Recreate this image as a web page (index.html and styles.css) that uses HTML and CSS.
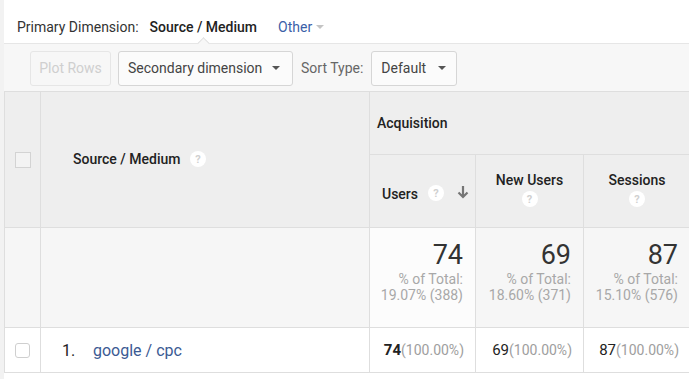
FILE: index.html
```html
<!DOCTYPE html>
<html>
<head>
<meta charset="utf-8">
<link rel="stylesheet" href="styles.css">
</head>
<body>
<div class="page">
  <div class="dimbar">
    <span class="dim-label">Primary Dimension:</span>
    <span class="dim-active">Source / Medium</span>
    <span class="dim-other">Other</span>
    <span class="caret caret-light"></span>
  </div>
  <div class="toolbar">
    <span class="notch"></span>
    <button class="btn btn-disabled">Plot Rows</button>
    <button class="btn btn-select btn-secondary">Secondary dimension <span class="caret"></span></button>
    <span class="sort-label">Sort Type:</span>
    <button class="btn btn-select btn-default">Default <span class="caret"></span></button>
  </div>
  <table class="grid">
    <colgroup>
      <col class="c-check">
      <col class="c-source">
      <col class="c-users">
      <col class="c-new">
      <col class="c-sess">
    </colgroup>
    <tr class="hrow1">
      <th class="check-cell" rowspan="2"><span class="checkbox"></span></th>
      <th class="source-head" rowspan="2">Source / Medium <span class="help"><span>?</span></span></th>
      <th class="group-head" colspan="3">Acquisition</th>
    </tr>
    <tr class="hrow2">
      <th class="metric-head users-head">
        <div class="users-inner">
          <span>Users</span><span class="help"><span>?</span></span>
          <svg class="sort-arrow" width="12" height="14" viewBox="0 0 12 14"><path d="M6 1 V12 M1.5 7.5 L6 12 L10.5 7.5" fill="none" stroke="#757575" stroke-width="2.2"/></svg>
        </div>
      </th>
      <th class="metric-head centered"><div class="mh-inner"><div>New Users</div><span class="help"><span>?</span></span></div></th>
      <th class="metric-head centered"><div class="mh-inner"><div>Sessions</div><span class="help"><span>?</span></span></div></th>
    </tr>
    <tr class="totals">
      <td class="check-cell"></td>
      <td></td>
      <td class="total sorted"><div class="big">74</div><div class="pct">% of Total:<br>19.07% (388)</div></td>
      <td class="total"><div class="big">69</div><div class="pct">% of Total:<br>18.60% (371)</div></td>
      <td class="total"><div class="big">87</div><div class="pct">% of Total:<br>15.10% (576)</div></td>
    </tr>
    <tr class="data">
      <td class="check-cell"><span class="checkbox round"></span></td>
      <td class="src"><span class="idx">1.</span><a class="link">google / cpc</a></td>
      <td class="val"><b>74</b><span class="vp">(100.00%)</span></td>
      <td class="val">69<span class="vp">(100.00%)</span></td>
      <td class="val">87<span class="vp">(100.00%)</span></td>
    </tr>
  </table>
</div>
</body>
</html>
```

FILE: styles.css
```css
html, body {
  margin: 0;
  padding: 0;
}
body {
  background: #f2f2f2;
  font-family: Roboto, "Liberation Sans", Arial, sans-serif;
  color: #333;
  width: 689px;
  height: 379px;
  overflow: hidden;
}
.page {
  margin-left: 4px;
  background: #fff;
  height: 379px;
}
.dimbar {
  height: 43px;
  display: flex;
  align-items: center;
  padding-left: 13px;
  padding-top: 11px;
  box-sizing: border-box;
  font-size: 14px;
}
.dim-label {
  color: #333;
}
.dim-active {
  font-weight: 500;
  color: #222;
  margin-left: 11px;
}
.dim-other {
  color: #3b5fa8;
  margin-left: 21px;
}
.caret {
  display: inline-block;
  width: 0;
  height: 0;
  border-left: 4px solid transparent;
  border-right: 4px solid transparent;
  border-top: 4px solid #555;
  vertical-align: middle;
}
.caret-light {
  border-top-color: #c4c4c4;
  margin-left: 4px;
}
.toolbar {
  position: relative;
  height: 48px;
  background: #f7f7f7;
  border-top: 1px solid #e6e6e6;
  box-sizing: border-box;
  display: flex;
  align-items: center;
  padding-left: 26px;
  padding-top: 1px;
}
.notch {
  position: absolute;
  left: 195px;
  top: -5px;
  width: 8px;
  height: 8px;
  background: #f7f7f7;
  border-left: 1px solid #e0e0e0;
  border-top: 1px solid #e0e0e0;
  transform: rotate(45deg);
}
.btn {
  font-family: Roboto, "Liberation Sans", Arial, sans-serif;
  font-size: 14px;
  height: 35px;
  box-sizing: border-box;
  border: 1px solid #d6d6d6;
  border-radius: 3px;
  background: #fbfbfb;
  color: #444;
  padding: 0 9px;
  margin: 0;
  white-space: nowrap;
}
.btn-disabled {
  width: 81px;
  padding: 0;
  text-align: center;
  color: #cfcfcf;
  border-color: #e6e6e6;
  background: #f7f7f7;
}
.btn-secondary {
  width: 175px;
  margin-left: 7px;
  text-align: left;
  display: flex;
  align-items: center;
  justify-content: space-between;
}
.btn-secondary .caret {
  margin-right: 3px;
}
.sort-label {
  font-size: 14px;
  color: #666;
  margin-left: 8px;
}
.btn-default {
  width: 86px;
  margin-left: 8px;
  display: flex;
  align-items: center;
  justify-content: space-between;
}
.btn-default .caret {
  margin-right: 1px;
}
.grid {
  border-collapse: collapse;
  table-layout: fixed;
  width: 686px;
  font-size: 14px;
}
.c-check { width: 36px; }
.c-source { width: 329px; }
.c-users { width: 106px; }
.c-new { width: 108px; }
.c-sess { width: 107px; }
.grid th, .grid td {
  border: 1px solid #dedede;
  padding: 0;
}
.grid th {
  background: #eeeeee;
  font-weight: 500;
  color: #222;
  text-align: left;
}
.hrow1 th { height: 62px; }
.hrow2 th { height: 72px; }
.grid .check-cell {
  text-align: center;
}
.checkbox {
  display: inline-block;
  width: 16px;
  height: 16px;
  box-sizing: border-box;
  border: 1px solid #d3d3d3;
  background: #f3f3f3;
  vertical-align: middle;
}
.checkbox.round {
  width: 15px;
  height: 15px;
  border-radius: 3px;
  background: #fff;
  border-color: #cfcfcf;
}
.grid .source-head {
  padding-left: 32px;
}
.help {
  display: inline-flex;
  width: 16px;
  height: 16px;
  border-radius: 50%;
  background: #fff;
  align-items: center;
  justify-content: center;
  vertical-align: middle;
  margin-left: 6px;
  position: relative;
  top: -1px;
}
.help span {
  font-size: 11px;
  font-weight: 700;
  color: #d0d0d0;
  line-height: 1;
}
.grid .group-head {
  padding-left: 7px;
}
.metric-head {
  vertical-align: top;
}
.users-head {
  vertical-align: middle;
}
.users-inner {
  display: flex;
  align-items: center;
  padding-left: 12px;
  padding-top: 6px;
}
.users-inner .help {
  margin-left: 10px;
}
.sort-arrow {
  margin-left: 13px;
  position: relative;
  top: -2px;
}
.grid .centered {
  text-align: center;
}
.mh-inner {
  padding-top: 17px;
}
.centered .help {
  margin: 4px 0 0 0;
}
.totals td {
  height: 99px;
  background: #f6f6f6;
  vertical-align: top;
}
.totals td.sorted {
  background: #fcfcfc;
}
.grid .total {
  text-align: right;
  padding-right: 12px;
}
.big {
  font-size: 27px;
  color: #333;
  margin-top: 12px;
  line-height: 30px;
}
.pct {
  font-size: 14px;
  color: #a8a8a8;
  line-height: 16px;
  margin-top: 1px;
}
.data td {
  height: 44px;
  background: #fff;
}
.src {
  font-size: 16px;
}
.idx {
  display: inline-block;
  margin-left: 21px;
  width: 31px;
  color: #222;
}
.link {
  color: #3b5a93;
}
.grid .val {
  text-align: right;
  padding-right: 11px;
  font-size: 15px;
  color: #222;
}
.val b {
  font-weight: 700;
}
.vp {
  font-size: 14px;
  color: #9e9e9e;
}
```
